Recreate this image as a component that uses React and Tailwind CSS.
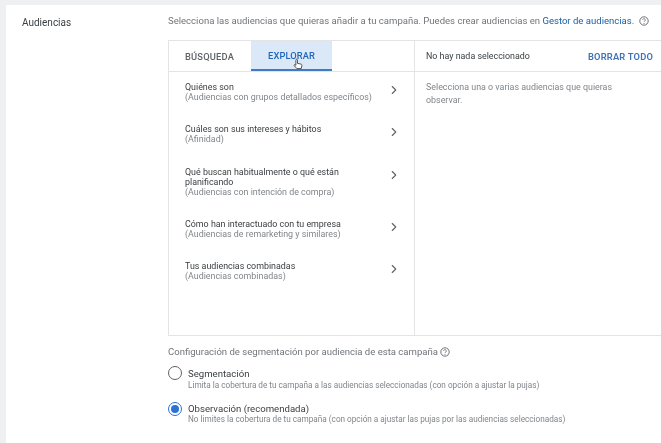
import { ChevronRight } from 'lucide-react';

const groups = [
  { title: ['Quiénes son'], sub: '(Audiencias con grupos detallados específicos)', h: 'h-[42px]' },
  { title: ['Cuáles son sus intereses y hábitos'], sub: '(Afinidad)', h: 'h-[43px]' },
  { title: ['Qué buscan habitualmente o qué están', 'planificando'], sub: '(Audiencias con intención de compra)', h: 'h-[52px]' },
  { title: ['Cómo han interactuado con tu empresa'], sub: '(Audiencias de remarketing y similares)', h: 'h-[42px]' },
  { title: ['Tus audiencias combinadas'], sub: '(Audiencias combinadas)', h: 'h-[42px]' },
];

const HelpIcon = () => (
  <svg width="10" height="10" viewBox="0 0 10 10" fill="none" className="shrink-0 text-[#5f6368]">
    <circle cx="5" cy="5" r="4.2" stroke="currentColor" strokeWidth="0.9" />
    <path d="M3.7 4a1.3 1.3 0 1 1 2.1 1c-.5.4-.8.6-.8 1.1" stroke="currentColor" strokeWidth="0.8" />
    <circle cx="5" cy="7.4" r="0.5" fill="currentColor" />
  </svg>
);

const CursorIcon = () => (
  <svg width="11" height="13" viewBox="0 0 11 13" className="absolute left-[42px] top-[17px]">
    <path d="M3.5 1.2c.7 0 1 .5 1 1.1v3l3.4.8c.8.2 1.2.7 1 1.5l-.7 3H3.9L1.2 7.6c-.4-.6.4-1.3 1-.8l.7.6V2.3c0-.6.1-1.1.6-1.1z" fill="#fff" stroke="#3c4043" strokeWidth="0.9" />
  </svg>
);

export default function App() {
  return (
    <div className="h-[443px] w-[661px] overflow-hidden bg-[#eff0f1] pl-[6px] pt-[5px] font-['Roboto',sans-serif] blur-[0.4px]">
      <div className="flex h-[438px] bg-white">
        <div className="w-[162px] shrink-0 pl-[16px] pt-[12px] text-[10px] leading-[12px] text-[#3c4043]">
          Audiencias
        </div>

        <div className="min-w-0 flex-1">
          <div className="flex h-[35px] items-start whitespace-nowrap pt-[10px] text-[9.55px] leading-[12px] text-[#70757a]">
            <span>
              Selecciona las audiencias que quieras añadir a tu campaña. Puedes crear audiencias en{' '}
              <span className="text-[#1a5fa8]">Gestor de audiencias.</span>
            </span>
            <span className="ml-[5px] mt-[1px]"><HelpIcon /></span>
          </div>

          {/* selector de audiencias */}
          <div className="flex h-[296px] border-y border-l border-[#e3e4e6]">
            <div className="flex w-[246px] shrink-0 flex-col border-r border-[#e3e4e6]">
              <div className="flex h-[31px] shrink-0 border-b border-[#e3e4e6] pt-[1px] text-[9.3px] font-medium">
                <div className="flex w-[82px] items-center pl-[16px] tracking-[0.2px] text-[#5f6368]">BÚSQUEDA</div>
                <div className="relative -mt-[1px] flex w-[81px] items-center justify-center border-b-2 border-[#3f7cc4] bg-[#dbe8f8] pt-[1px] tracking-[0.1px] text-[#1f66b8]">
                  EXPLORAR
                  <CursorIcon />
                </div>
              </div>
              <div className="pt-[2px]">
                {groups.map((g) => (
                  <div key={g.sub} className={`flex items-start justify-between pl-[16px] pr-[13px] pt-[8px] ${g.h}`}>
                    <div className="text-[8.9px] leading-[10px]">
                      {g.title.map((line) => (
                        <div key={line} className="text-[#3c4043]">{line}</div>
                      ))}
                      <div className="text-[#80868b]">{g.sub}</div>
                    </div>
                    <ChevronRight size={14} strokeWidth={1.9} className="mt-[1px] shrink-0 text-[#5f6368]" />
                  </div>
                ))}
              </div>
            </div>

            <div className="min-w-0 flex-1">
              <div className="flex h-[31px] items-center justify-between whitespace-nowrap border-b border-[#e3e4e6] pl-[11px] pr-[8px] pt-[1px]">
                <span className="text-[8.9px] text-[#3c4043]">No hay nada seleccionado</span>
                <span className="text-[9.3px] font-semibold tracking-[0.2px] text-[#3f72b5]">BORRAR TODO</span>
              </div>
              <p className="pl-[11px] pr-[24px] pt-[9px] text-[8.9px] leading-[13px] text-[#80868b]">
                Selecciona una o varias audiencias que quieras observar.
              </p>
            </div>
          </div>

          {/* configuracion de segmentacion */}
          <div className="flex items-center gap-[2px] pt-[10px] text-[9.55px] leading-[12px] text-[#70757a]">
            Configuración de segmentación por audiencia de esta campaña
            <HelpIcon />
          </div>
          <div className="mt-[8px] flex items-start gap-[6px]">
            <div className="size-[14px] shrink-0 rounded-full border-[1.5px] border-[#5f6368]" />
            <div className="pt-[1.5px]">
              <div className="text-[9.6px] leading-[11px] text-[#3c4043]">Segmentación</div>
              <div className="pt-[1px] text-[8.2px] leading-[11px] text-[#80868b]">
                Limita la cobertura de tu campaña a las audiencias seleccionadas (con opción a ajustar la pujas)
              </div>
            </div>
          </div>
          <div className="mt-[11px] flex items-start gap-[6px]">
            <div className="flex size-[14px] shrink-0 items-center justify-center rounded-full border-[1.5px] border-[#2b72d6]">
              <div className="size-[8px] rounded-full bg-[#2b72d6]" />
            </div>
            <div className="pt-[1px]">
              <div className="text-[9.6px] leading-[11px] text-[#3c4043]">Observación (recomendada)</div>
              <div className="whitespace-nowrap text-[8.2px] leading-[11px] text-[#80868b]">
                No limites la cobertura de tu campaña (con opción a ajustar las pujas por las audiencias seleccionadas)
              </div>
            </div>
          </div>
        </div>
      </div>
    </div>
  );
}
